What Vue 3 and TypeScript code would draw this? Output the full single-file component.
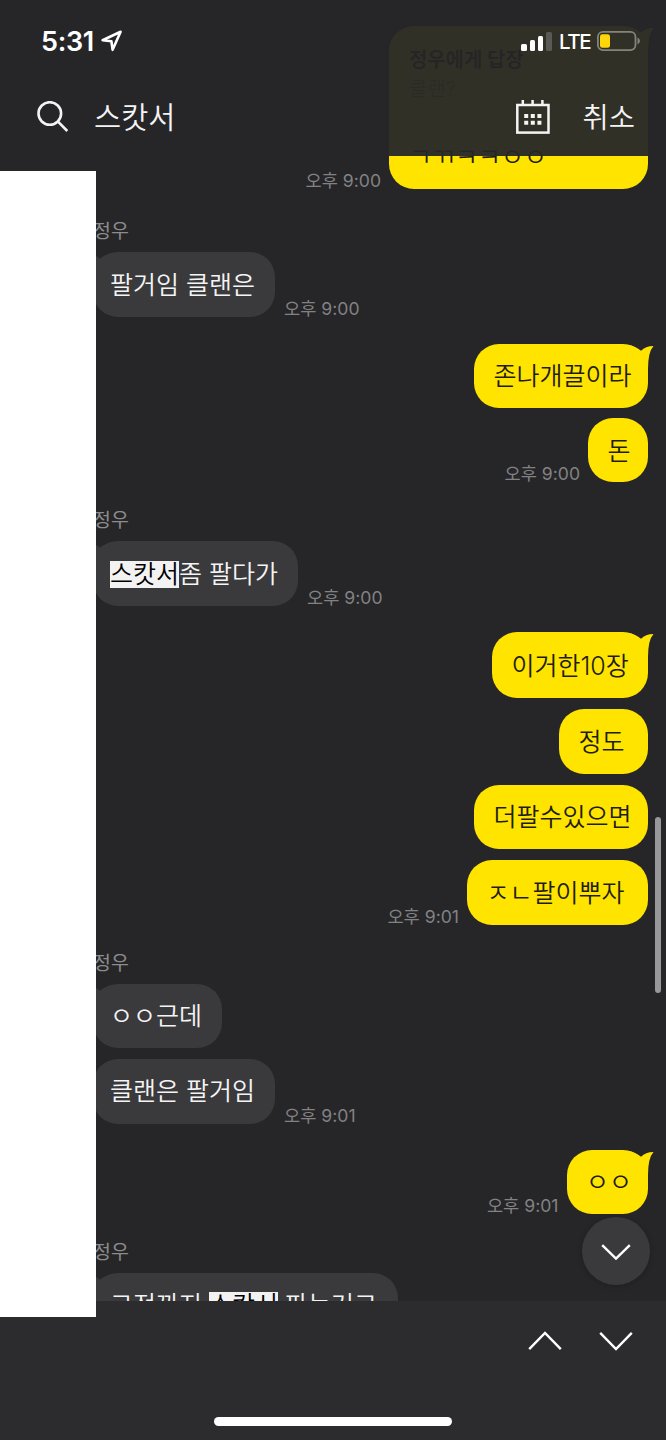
<script setup lang="ts">
interface Part {
  text: string
  hit?: boolean
}

interface Message {
  id: number
  mine: boolean
  parts: Part[]
  width: number
  height: number
  gap: number
  sender?: string
  time?: string
  tail?: boolean
}

const quote = { title: '정우에게 답장', body: '클랜?', reply: 'ㄱㄲㅋㅋㅇㅇ', time: '오후 9:00' }

const messages: Message[] = [
  { id: 1, mine: false, sender: '정우', parts: [{ text: '팔거임 클랜은' }], width: 182, height: 65, gap: 30, time: '오후 9:00', tail: true },
  { id: 2, mine: true, parts: [{ text: '존나개끌이라' }], width: 174, height: 64, gap: 26.5, tail: true },
  { id: 3, mine: true, parts: [{ text: '돈' }], width: 60, height: 64, gap: 10.5, time: '오후 9:00' },
  { id: 4, mine: false, sender: '정우', parts: [{ text: '스캇서', hit: true }, { text: '좀 팔다가' }], width: 205, height: 65, gap: 26, time: '오후 9:00', tail: true },
  { id: 5, mine: true, parts: [{ text: '이거한10장' }], width: 156, height: 66, gap: 26, tail: true },
  { id: 6, mine: true, parts: [{ text: '정도' }], width: 89, height: 65.5, gap: 10.5 },
  { id: 7, mine: true, parts: [{ text: '더팔수있으면' }], width: 174, height: 64.5, gap: 10.5 },
  { id: 8, mine: true, parts: [{ text: 'ㅈㄴ팔이뿌자' }], width: 181, height: 65.5, gap: 10.5, time: '오후 9:01' },
  { id: 9, mine: false, sender: '정우', parts: [{ text: 'ㅇㅇ근데' }], width: 129, height: 63.5, gap: 26, tail: true },
  { id: 10, mine: false, parts: [{ text: '클랜은 팔거임' }], width: 182, height: 65, gap: 11, time: '오후 9:01' },
  { id: 11, mine: true, parts: [{ text: 'ㅇㅇ' }], width: 81.5, height: 64, gap: 26, time: '오후 9:01', tail: true },
  { id: 12, mine: false, sender: '정우', parts: [{ text: '그전까지 ' }, { text: '스캇서', hit: true }, { text: ' 파는거고' }], width: 305, height: 65, gap: 26, tail: true },
]

const signal = [7, 10.5, 14.5, 19]
const tailPath = 'M0 1 L5 3 Q8.5 4.5 11 6.8 Q15.5 2 23.5 2 Q18 8 18 25 L8 25 Z'
</script>

<template>
  <div class="screen">
    <main class="chat">
      <div class="row mine quote-row">
        <span class="time">{{ quote.time }}</span>
        <div class="bubble quote">
          <svg class="tail" viewBox="0 0 24 26"><path :d="tailPath" /></svg>
          <strong>{{ quote.title }}</strong>
          <span class="quoted">{{ quote.body }}</span>
          <span class="reply">{{ quote.reply }}</span>
        </div>
      </div>

      <section
        v-for="m in messages"
        :key="m.id"
        class="message"
        :style="{ '--gap': m.gap + 'px', '--w': m.width + 'px', '--h': m.height + 'px' }"
      >
        <div v-if="m.sender" class="sender">{{ m.sender }}</div>
        <div class="row" :class="m.mine ? 'mine' : 'theirs'">
          <div class="bubble sized">
            <svg v-if="m.tail" class="tail" viewBox="0 0 24 26"><path :d="tailPath" /></svg>
            <span class="text"><span v-for="(p, i) in m.parts" :key="i" :class="{ hit: p.hit }">{{ p.text }}</span></span>
          </div>
          <span v-if="m.time" class="time">{{ m.time }}</span>
        </div>
      </section>
    </main>

    <header class="top">
      <div class="status">
        <span class="clock">5:31</span>
        <svg class="location" viewBox="0 0 22 22"><path d="M1.6 10.2 L19.6 1.8 L11.6 19.8 L10.4 11.2 Z" /></svg>
        <div class="indicators">
          <div class="signal"><i v-for="h in signal" :key="h" :style="{ height: h + 'px' }"></i></div>
          <span class="network">LTE</span>
          <svg class="battery" viewBox="0 0 44 20">
            <rect x="0.9" y="0.9" width="37.6" height="18.2" rx="5" class="shell" />
            <rect x="3" y="3.2" width="10" height="13.6" rx="2.4" class="charge" />
            <path d="M40.5 6.6 Q43 8 43 10 Q43 12 40.5 13.4 Z" class="cap" />
          </svg>
        </div>
      </div>
      <div class="search">
        <svg class="lens" viewBox="0 0 32 32"><circle cx="12.8" cy="12.5" r="11.3" /><path d="M21 20.7 L30.3 30" /></svg>
        <span class="query">스캇서</span>
        <svg class="calendar" viewBox="0 0 34 34">
          <rect x="1.3" y="5" width="31.2" height="27.6" class="frame" />
          <path d="M6.8 0 V5 M16.6 0 V5 M26.4 0 V5" class="frame" />
          <path d="M8.2 14 h4 v4 h-4z M14.8 14 h4 v4 h-4z M21.4 14 h4 v4 h-4z M8.2 20.8 h4 v4 h-4z M14.8 20.8 h4 v4 h-4z M21.4 20.8 h4 v4 h-4z" class="days" />
        </svg>
        <span class="cancel">취소</span>
      </div>
    </header>

    <div class="scrollbar"></div>
    <button class="to-bottom" aria-label="down">
      <svg viewBox="0 0 30 16"><path d="M1.2 1.2 L15 14.6 L28.8 1.2" /></svg>
    </button>

    <footer class="bottom">
      <div class="steps">
        <svg viewBox="0 0 34 20"><path d="M1.2 18.2 L17 2 L32.8 18.2" /></svg>
        <svg viewBox="0 0 34 20"><path d="M1.2 1.8 L17 18 L32.8 1.8" /></svg>
      </div>
      <div class="home"></div>
    </footer>
    <div class="cover"></div>
  </div>
</template>

<style>
body {
  margin: 0;
  background: #262628;
}
</style>

<style scoped>
.screen {
  position: relative;
  width: 666px;
  height: 1440px;
  overflow: hidden;
  display: flex;
  flex-direction: column;
  justify-content: space-between;
  background: #262628;
  color: #f4f4f5;
  font-family: Inter, "Noto Sans CJK KR", sans-serif;
}

.chat {
  position: absolute;
  inset: 0;
  box-sizing: border-box;
  padding: 26px 18px 0 93px;
  overflow: hidden;
}

.message {
  padding-top: var(--gap);
}

.sender {
  box-sizing: border-box;
  height: 33px;
  padding-top: 1px;
  line-height: 22px;
  font-size: 19.5px;
  font-weight: 400;
  color: #8c8c8e;
}

.row {
  display: flex;
  align-items: flex-end;
  gap: 8px;
}

.mine {
  flex-direction: row-reverse;
}

.theirs {
  gap: 9px;
}

.quote-row {
  flex-direction: row;
  justify-content: flex-end;
}

.bubble {
  position: relative;
  box-sizing: border-box;
  border-radius: 25px;
  background: #3a3a3c;
  font-size: 25px;
  font-weight: 350;
  line-height: 36px;
  white-space: pre;
}

.mine .bubble {
  background: #ffe400;
  color: #1f1d12;
}

.sized {
  width: var(--w);
  height: var(--h);
  display: flex;
  align-items: center;
  padding: 0 17px;
}

.mine .sized {
  padding: 1px 17px 0 19.5px;
}

.tail {
  position: absolute;
  top: 0;
  right: -6px;
  width: 24px;
  height: 26px;
  fill: #ffe400;
}

.theirs .tail {
  right: auto;
  left: -6px;
  transform: scaleX(-1);
  fill: #3a3a3c;
}

.text {
  position: relative;
}

.hit {
  display: inline-block;
  height: 27px;
  line-height: 27px;
  background: #f2f2f3;
  color: #000;
}

.quote {
  width: 259px;
  height: 163px;
  padding: 20px 20px 0;
  display: flex;
  flex-direction: column;
}

.quote strong {
  font-size: 19.9px;
  line-height: 28px;
  font-weight: 700;
}

.quoted {
  font-size: 20px;
  line-height: 30px;
  color: #8c7f20;
}

.reply {
  margin-top: 35px;
}

.time {
  font-size: 17.6px;
  line-height: 17px;
  font-weight: 400;
  color: #828284;
  white-space: nowrap;
}

.top {
  position: relative;
  height: 156px;
  background: rgba(38, 38, 40, 0.95);
}

.status {
  display: flex;
  align-items: center;
  height: 82px;
  padding: 0 25px 0 41px;
}

.clock {
  font-size: 27px;
  font-weight: 600;
  letter-spacing: -0.3px;
  color: #fff;
}

.location {
  width: 22px;
  height: 22px;
  margin-left: 7px;
  fill: none;
  stroke: #fff;
  stroke-width: 2.6;
  stroke-linejoin: round;
}

.indicators {
  display: flex;
  align-items: center;
  margin-left: auto;
}

.signal {
  display: flex;
  align-items: flex-end;
  gap: 3px;
  height: 19px;
}

.signal i {
  width: 5.3px;
  border-radius: 1.5px;
  background: #fff;
}

.signal i:last-child {
  background: #5b5953;
}

.network {
  margin: 0 7px 0 7.5px;
  font-size: 20.5px;
  font-weight: 500;
  letter-spacing: -1.5px;
  color: #fff;
}

.battery {
  width: 44px;
  height: 20px;
}

.shell {
  fill: none;
  stroke: #85837e;
  stroke-width: 1.8;
}

.charge {
  fill: #ffd60a;
}

.cap {
  fill: #85837e;
}

.search {
  display: flex;
  align-items: center;
  height: 70px;
  padding: 0 31px 0 37px;
}

.lens {
  width: 32px;
  height: 32px;
  fill: none;
  stroke: #f4f4f5;
  stroke-width: 2.6;
}

.query {
  margin-left: 25px;
  padding-bottom: 4px;
  font-size: 29.5px;
  font-weight: 350;
}

.calendar {
  width: 34px;
  height: 34px;
  margin-left: auto;
  margin-right: 33px;
}

.frame {
  fill: none;
  stroke: #f4f4f5;
  stroke-width: 2.5;
}

.days {
  fill: #f4f4f5;
}

.cancel {
  padding-bottom: 3px;
  font-size: 28.5px;
  font-weight: 350;
}

.scrollbar {
  position: absolute;
  top: 817px;
  right: 5px;
  width: 6px;
  height: 176px;
  border-radius: 3px;
  background: #98989a;
}

.to-bottom {
  position: absolute;
  top: 1217px;
  left: 582px;
  width: 68px;
  height: 68px;
  display: grid;
  place-items: center;
  padding: 2px 0 0;
  border: 0;
  border-radius: 50%;
  background: #3a3a3c;
  box-shadow: 0 1px 6px rgba(0, 0, 0, 0.2);
}

.to-bottom svg {
  width: 30px;
  height: 16px;
}

.to-bottom path,
.steps path {
  fill: none;
  stroke: #fff;
  stroke-width: 2.4;
}

.bottom {
  position: relative;
  box-sizing: border-box;
  height: 139px;
  padding: 30px 33px 14px;
  display: flex;
  flex-direction: column;
  justify-content: space-between;
  background: #2c2c2e;
}

.steps {
  display: flex;
  justify-content: flex-end;
  gap: 37px;
}

.steps svg {
  width: 34px;
  height: 20px;
}

.home {
  align-self: center;
  width: 238px;
  height: 9px;
  border-radius: 5px;
  background: #fff;
}

.cover {
  position: absolute;
  top: 171px;
  left: 0;
  width: 96px;
  height: 1146px;
  background: #fff;
}
</style>
